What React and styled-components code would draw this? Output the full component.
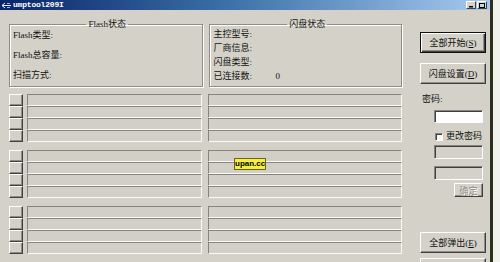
import React from "react";
import styled, { createGlobalStyle } from "styled-components";

const GlobalStyle = createGlobalStyle`
  html, body {
    margin: 0;
    padding: 0;
    background: #f2f2ec;
  }
  body {
    font-family: "Liberation Serif", "Noto Sans CJK SC", serif;
    font-size: 9px;
    color: #111;
  }
`;

const Window = styled.div`
  position: relative;
  width: 490px;
  height: 262px;
  background: #d4d1c8;
  border-right: 3px solid #2f2f1d;
  overflow: hidden;
`;

const TitleBar = styled.div`
  height: 10px;
  display: flex;
  align-items: center;
  padding: 0 2px;
  background: linear-gradient(90deg, #0a246a 0%, #3a6ea5 45%, #a6caf0 100%);
`;

const TitleText = styled.span`
  margin-left: 2px;
  font-family: "Liberation Mono", monospace;
  font-weight: bold;
  font-size: 8px;
  line-height: 10px;
  color: #fff;
  letter-spacing: -0.2px;
`;

const TitleButtons = styled.div`
  margin-left: auto;
  display: flex;
  gap: 1px;
  margin-right: 1px;
`;

const TitleButton = styled.div`
  width: 10px;
  height: 8px;
  box-sizing: border-box;
  background: #d4d1c8;
  border-top: 1px solid #fff;
  border-left: 1px solid #fff;
  border-right: 1px solid #404040;
  border-bottom: 1px solid #404040;
  display: flex;
  align-items: center;
  justify-content: center;
`;

const Body = styled.div`
  display: flex;
`;

const LeftArea = styled.div`
  width: 402px;
  box-sizing: border-box;
  padding-left: 9px;
  display: flex;
  flex-direction: column;
`;

const GroupRow = styled.div`
  display: flex;
  gap: 6px;
  margin-top: 10px;
`;

const Group = styled.fieldset`
  width: ${(p) => p.$width}px;
  height: 67px;
  box-sizing: border-box;
  margin: 0;
  padding: ${(p) => p.$padTop}px 0 0 ${(p) => p.$padLeft}px;
  border: 1px solid #8e8c84;
  box-shadow: inset 1px 1px 0 #fff, 1px 1px 0 #fff;
  min-inline-size: 0;

  legend {
    margin: 0 auto;
    padding: 0 2px;
    line-height: 9px;
    font-size: 9px;
  }
`;

const InfoList = styled.div`
  display: flex;
  flex-direction: column;
  gap: ${(p) => p.$gap}px;
`;

const InfoRow = styled.div`
  display: flex;
  height: 9px;
  line-height: 9px;
  white-space: nowrap;
`;

const InfoLabel = styled.span`
  width: 62px;
`;

const BlockStack = styled.div`
  display: flex;
  flex-direction: column;
  gap: 8px;
  margin-top: 7px;
`;

const Block = styled.div`
  display: flex;
`;

const Column = styled.div`
  display: flex;
  flex-direction: column;
  width: ${(p) => p.$width}px;
  margin-left: ${(p) => p.$offset || 0}px;
`;

const SmallButton = styled.div`
  height: 12px;
  box-sizing: border-box;
  background: #d4d1c8;
  border-top: 1px solid #fff;
  border-left: 1px solid #fff;
  border-right: 1px solid #404040;
  border-bottom: 1px solid #404040;
  box-shadow: inset -1px -1px 0 #8e8c84;
`;

const FieldRow = styled.div`
  height: 12px;
  box-sizing: border-box;
  background: #d2cfc6;
  border: 1px solid;
  border-color: #86847c #fbfaf6 #fbfaf6 #86847c;
`;

const RightPanel = styled.div`
  display: flex;
  flex-direction: column;
  align-items: flex-start;
  padding: 22px 0 0 18px;
`;

const PushButton = styled.button`
  width: 66px;
  height: 21px;
  margin: 0;
  margin-top: ${(p) => p.$top || 0}px;
  padding: 0;
  box-sizing: border-box;
  font-family: "Liberation Serif", "Noto Sans CJK SC", serif;
  font-size: 9px;
  color: ${(p) => (p.disabled ? "#8e8c84" : "#111")};
  text-shadow: ${(p) => (p.disabled ? "1px 1px 0 #fff" : "none")};
  background: #d4d1c8;
  border: 1px solid;
  border-color: ${(p) => (p.$default ? "#111" : "#fff #404040 #404040 #fff")};
  box-shadow: ${(p) =>
    p.$default
      ? "inset 1px 1px 0 #fff, inset -1px -1px 0 #404040, inset -2px -2px 0 #8e8c84"
      : "inset -1px -1px 0 #8e8c84"};
  white-space: nowrap;

  u {
    text-decoration: underline;
  }
`;

const SmallPushButton = styled(PushButton)`
  width: 29px;
  height: 14px;
  margin-left: 34px;
`;

const PassLabel = styled.div`
  margin: 11px 0 0 2px;
  line-height: 9px;
  height: 9px;
`;

const TextBox = styled.div`
  width: 49px;
  height: ${(p) => p.$height}px;
  margin: ${(p) => p.$top}px 0 0 14px;
  box-sizing: border-box;
  background: ${(p) => (p.$white ? "#fff" : "#d4d1c8")};
  border: 1px solid;
  border-color: #86847c #fff #fff #86847c;
  box-shadow: inset 1px 1px 0 #404040;
`;

const CheckRow = styled.label`
  display: flex;
  align-items: center;
  gap: 3px;
  margin: 9px 0 0 15px;
  height: 9px;
  line-height: 9px;
`;

const CheckBox = styled.span`
  width: 8px;
  height: 8px;
  box-sizing: border-box;
  background: #f8f8f4;
  border: 1px solid;
  border-color: #86847c #fff #fff #86847c;
  box-shadow: inset 1px 1px 0 #404040;
`;

const Badge = styled.div`
  position: absolute;
  left: 234px;
  top: 158px;
  width: 32px;
  height: 12px;
  box-sizing: border-box;
  background: #f4f03c;
  border: 1px solid #6a6420;
  font-family: "Liberation Sans", sans-serif;
  font-weight: bold;
  font-size: 8px;
  line-height: 10px;
  text-align: center;
  color: #000;
`;

const AppIcon = () => (
  <svg width="9" height="7" viewBox="0 0 9 7">
    <path d="M0 3.5 L3 1 M0 3.5 L3 6 M0 3.5 H9" stroke="#e8eef8" strokeWidth="1" fill="none" />
    <path d="M5 1.5 H8 M5 5.5 H8" stroke="#9fb4d8" strokeWidth="1" />
  </svg>
);

const flashInfo = ["Flash类型:", "Flash总容量:", "扫描方式:"];
const diskInfo = [
  ["主控型号:", ""],
  ["厂商信息:", ""],
  ["闪盘类型:", ""],
  ["已连接数:", "0"],
];

const Slots = () => (
  <Block>
    <Column $width={14}>
      {[0, 1, 2, 3].map((i) => (
        <SmallButton key={i} />
      ))}
    </Column>
    <Column $width={175} $offset={4}>
      {[0, 1, 2, 3].map((i) => (
        <FieldRow key={i} />
      ))}
    </Column>
    <Column $width={194} $offset={6}>
      {[0, 1, 2, 3].map((i) => (
        <FieldRow key={i} />
      ))}
    </Column>
  </Block>
);

export default function App() {
  return (
    <>
      <GlobalStyle />
      <Window>
        <TitleBar>
          <AppIcon />
          <TitleText>umptool209I</TitleText>
          <TitleButtons>
            <TitleButton>
              <svg width="5" height="5" viewBox="0 0 5 5">
                <rect x="0" y="3" width="4" height="1.5" fill="#000" />
              </svg>
            </TitleButton>
            <TitleButton>
              <svg width="6" height="5" viewBox="0 0 6 5">
                <rect x="0.5" y="0.5" width="5" height="4" fill="none" stroke="#000" strokeWidth="1" />
              </svg>
            </TitleButton>
          </TitleButtons>
        </TitleBar>
        <Body>
          <LeftArea>
            <GroupRow>
              <Group $width={194} $padTop={2} $padLeft={3}>
                <legend>Flash状态</legend>
                <InfoList $gap={11}>
                  {flashInfo.map((t) => (
                    <InfoRow key={t}>{t}</InfoRow>
                  ))}
                </InfoList>
              </Group>
              <Group $width={194} $padTop={1} $padLeft={4}>
                <legend>闪盘状态</legend>
                <InfoList $gap={5}>
                  {diskInfo.map(([l, v]) => (
                    <InfoRow key={l}>
                      <InfoLabel>{l}</InfoLabel>
                      <span>{v}</span>
                    </InfoRow>
                  ))}
                </InfoList>
              </Group>
            </GroupRow>
            <BlockStack>
              <Slots />
              <Slots />
              <Slots />
            </BlockStack>
          </LeftArea>
          <RightPanel>
            <PushButton $default>
              全部开始(<u>S</u>)
            </PushButton>
            <PushButton $top={10}>
              闪盘设置(<u>D</u>)
            </PushButton>
            <PassLabel>密码:</PassLabel>
            <TextBox $white $height={13} $top={6} />
            <CheckRow>
              <CheckBox />
              <span>更改密码</span>
            </CheckRow>
            <TextBox $height={14} $top={4} />
            <TextBox $height={14} $top={7} />
            <SmallPushButton $top={3} disabled>
              确定
            </SmallPushButton>
            <PushButton $top={35}>
              全部弹出(<u>E</u>)
            </PushButton>
            <PushButton $top={5} />
          </RightPanel>
        </Body>
        <Badge>upan.cc</Badge>
      </Window>
    </>
  );
}
